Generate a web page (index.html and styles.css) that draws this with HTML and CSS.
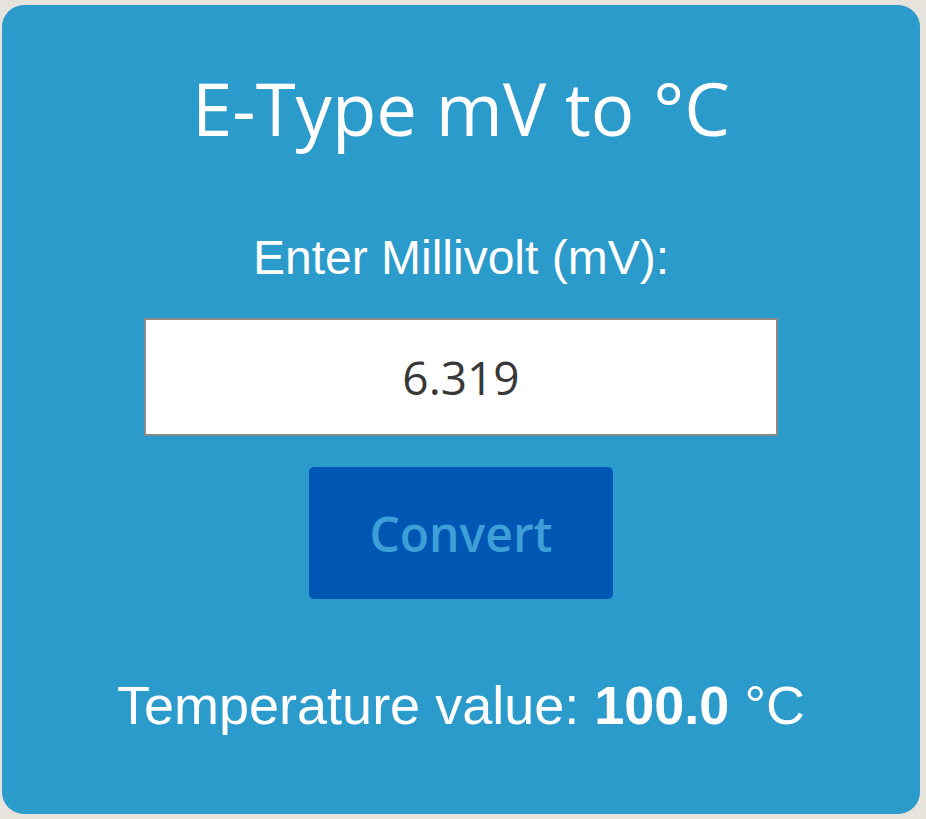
FILE: index.html
```html
<!DOCTYPE html>
<html>
<head>
<meta charset="utf-8">
<link rel="stylesheet" href="styles.css">
</head>
<body>
<div class="card">
  <h1 class="title">E-Type mV to °C</h1>
  <label class="label" for="mv">Enter Millivolt (mV):</label>
  <input class="input" id="mv" type="text" value="6.319">
  <button class="btn">Convert</button>
  <p class="result">Temperature value: <b>100.0</b> °C</p>
</div>
</body>
</html>
```
FILE: styles.css
```css
html, body {
  margin: 0;
  padding: 0;
  background: #e6e2dc;
}
body {
  padding: 5px 6px 5px 2px;
  height: 819px;
  box-sizing: border-box;
}
.card {
  background: #2a9bcb;
  border-radius: 22px;
  height: 809px;
  box-sizing: border-box;
  display: flex;
  flex-direction: column;
  align-items: center;
  color: #fff;
}
.title {
  margin: 59px 0 0;
  font-family: "Open Sans", sans-serif;
  font-weight: 400;
  font-size: 72.5px;
  line-height: 88px;
}
.label {
  margin-top: 78px;
  font-family: "Liberation Sans", Arial, sans-serif;
  font-size: 48px;
  line-height: 56px;
}
.input {
  margin-top: 32px;
  width: 634px;
  height: 118px;
  box-sizing: border-box;
  border: 2px solid #8a8a8a;
  background: #fff;
  text-align: center;
  font-family: "Open Sans", sans-serif;
  font-size: 46px;
  color: #383838;
  padding: 0;
  outline: none;
}
.btn {
  margin-top: 31px;
  width: 304px;
  height: 132px;
  border: none;
  border-radius: 5px;
  background: #0057b3;
  color: #3d9fd8;
  font-family: "Open Sans", sans-serif;
  font-weight: 600;
  font-size: 48px;
  padding: 0;
}
.result {
  margin: 76px 0 0;
  font-family: "Liberation Sans", Arial, sans-serif;
  font-size: 54px;
  line-height: 60px;
}
.result b {
  font-weight: 700;
}
```
